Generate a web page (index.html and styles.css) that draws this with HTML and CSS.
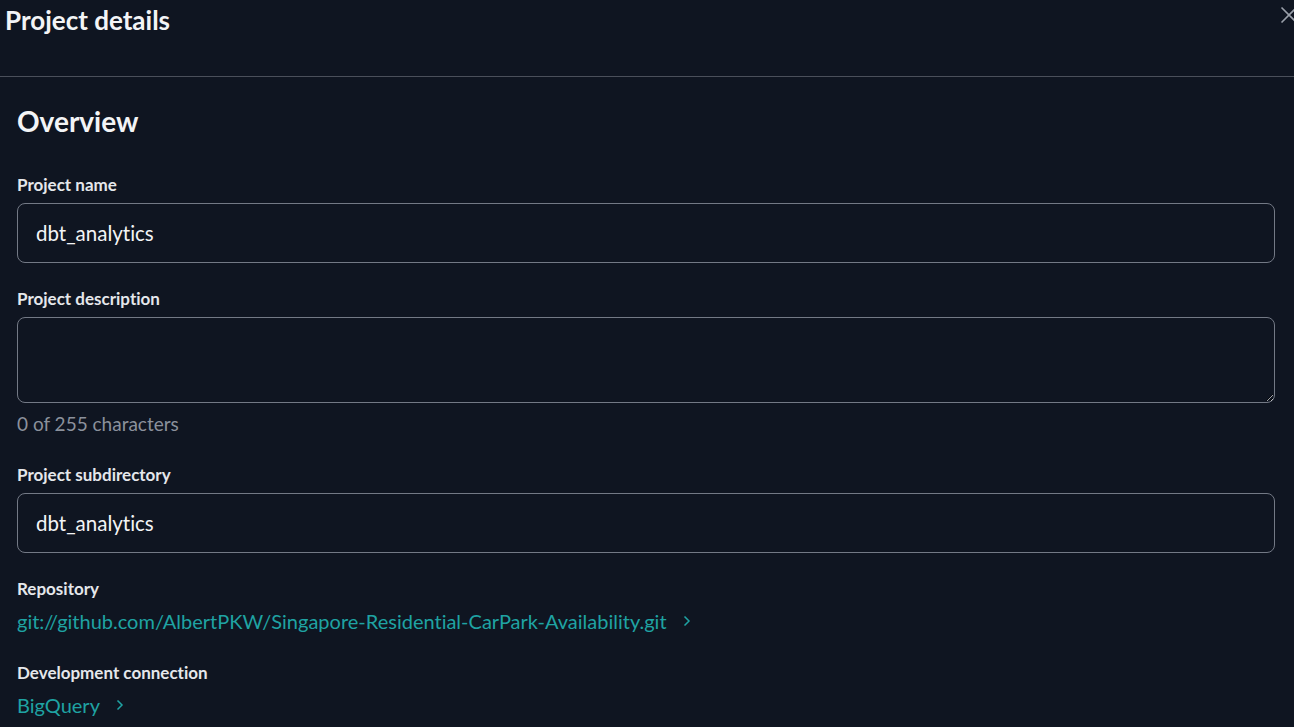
FILE: index.html
```html
<!DOCTYPE html>
<html lang="en">
<head>
<meta charset="utf-8">
<title>Project details</title>
<link rel="stylesheet" href="styles.css">
</head>
<body>
<header class="header">
  <h1 class="title">Project details</h1>
  <button class="close" aria-label="Close">
    <svg width="18" height="18" viewBox="0 0 18 18"><path d="M1.5 1.5 L16.5 16.5 M16.5 1.5 L1.5 16.5" stroke="#9aa0aa" stroke-width="1.6" fill="none"/></svg>
  </button>
</header>
<main class="content">
  <h2 class="section-title">Overview</h2>

  <div class="field first">
    <label class="label">Project name</label>
    <input class="input" type="text" value="dbt_analytics">
  </div>

  <div class="field desc-field">
    <label class="label">Project description</label>
    <textarea class="textarea"></textarea>
    <div class="helper">0 of 255 characters</div>
  </div>

  <div class="field after-helper">
    <label class="label">Project subdirectory</label>
    <input class="input" type="text" value="dbt_analytics">
  </div>

  <div class="field repo-field">
    <div class="label">Repository</div>
    <a class="link" href="#">git://github.com/AlbertPKW/Singapore-Residential-CarPark-Availability.git
      <svg class="chev" width="8" height="12" viewBox="0 0 8 12"><path d="M1.5 1.5 L6 6 L1.5 10.5" stroke="#1fa3a3" stroke-width="1.5" fill="none"/></svg>
    </a>
  </div>

  <div class="field link-field">
    <div class="label">Development connection</div>
    <a class="link" href="#">BigQuery
      <svg class="chev" width="8" height="12" viewBox="0 0 8 12"><path d="M1.5 1.5 L6 6 L1.5 10.5" stroke="#1fa3a3" stroke-width="1.5" fill="none"/></svg>
    </a>
  </div>
</main>
</body>
</html>
```
FILE: styles.css
```css
* { box-sizing: border-box; }
html, body {
  margin: 0;
  background: #0f1521;
  color: #f3f4f6;
  font-family: "Lato", "Liberation Sans", sans-serif;
  font-variant-ligatures: none;
  color-scheme: dark;
  overflow: hidden;
}
.header {
  height: 77px;
  border-bottom: 1px solid #4a4f5a;
  display: flex;
  justify-content: space-between;
  align-items: flex-start;
  padding: 4px 0 0 5px;
}
.title {
  margin: 0;
  font-size: 26px;
  font-weight: 700;
  line-height: 32px;
  color: #f3f4f6;
}
.close {
  background: none;
  border: 0;
  padding: 0;
  margin: 2px -4px 0 0;
  cursor: pointer;
  line-height: 0;
}
.content {
  padding: 0 19px 0 17px;
}
.section-title {
  margin: 26px 0 0;
  font-size: 28px;
  font-weight: 700;
  line-height: 36px;
}
.field { display: flex; flex-direction: column; margin-top: 25px; }
.field.first { margin-top: 34px; }
.field.desc-field { margin-top: 24px; }
.field.after-helper { margin-top: 27px; }
.field.repo-field { margin-top: 24px; }
.field.link-field { margin-top: 28px; }
.label {
  font-size: 17px;
  font-weight: 700;
  line-height: 24px;
  color: #e5e7eb;
  margin-bottom: 6px;
}
.input, .textarea {
  width: 100%;
  background: #0f1521;
  border: 1px solid #737985;
  border-radius: 8px;
  color: #f3f4f6;
  font-family: inherit;
  font-variant-ligatures: none;
  font-size: 20.5px;
  padding: 0 18px;
  outline: none;
}
.input { height: 60px; }
.textarea { height: 86px; resize: vertical; display: block; }
.helper {
  margin-top: 9px;
  font-size: 19px;
  line-height: 24px;
  color: #8b919c;
}
.link {
  margin-top: 2px;
  font-size: 20px;
  line-height: 24px;
  color: #1fa3a3;
  text-decoration: none;
  display: inline-flex;
  align-items: center;
  gap: 16px;
  align-self: flex-start;
}
.chev { display: block; }
```
